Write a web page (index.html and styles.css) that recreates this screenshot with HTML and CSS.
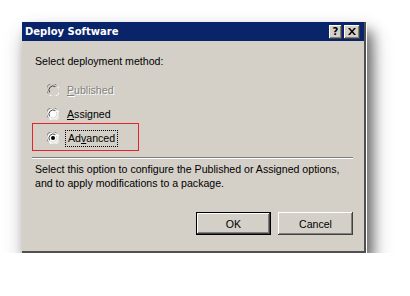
FILE: index.html
```html
<!DOCTYPE html>
<html>
<head>
<meta charset="utf-8">
<link rel="stylesheet" href="styles.css">
</head>
<body>
<div class="dialog">
  <div class="titlebar">
    <span class="title">Deploy Software</span>
    <div class="tbtns">
      <span class="tbtn help">?</span>
      <span class="tbtn close"><svg width="8" height="7" viewBox="0 0 8 7"><path d="M0 0h2l2 2.5L6 0h2L5 3.5 8 7H6L4 4.5 2 7H0l3-3.5z" fill="#000"/></svg></span>
    </div>
  </div>
  <div class="content">
    <p class="prompt">Select deployment method:</p>
    <div class="options">
      <div class="opt disabled">
        <svg class="radio" width="12" height="12" viewBox="0 0 12 12"><circle cx="6" cy="6" r="5.5" fill="#d4d0c8"/><path d="M1.2 9.5A5.5 5.5 0 0 1 9.5 1.2" stroke="#808080" fill="none"/><path d="M2.6 8.4A4.2 4.2 0 0 1 8.4 2.6" stroke="#404040" fill="none"/><path d="M10.8 2.5A5.5 5.5 0 0 1 2.5 10.8" stroke="#fff" fill="none"/></svg>
        <span class="lbl"><u>P</u>ublished</span>
      </div>
      <div class="opt">
        <svg class="radio" width="12" height="12" viewBox="0 0 12 12"><circle cx="6" cy="6" r="5.5" fill="#fff"/><path d="M1.2 9.5A5.5 5.5 0 0 1 9.5 1.2" stroke="#808080" fill="none"/><path d="M2.6 8.4A4.2 4.2 0 0 1 8.4 2.6" stroke="#404040" fill="none"/><path d="M10.8 2.5A5.5 5.5 0 0 1 2.5 10.8" stroke="#fff" fill="none"/><path d="M9.4 3.6A4.2 4.2 0 0 1 3.6 9.4" stroke="#d4d0c8" fill="none"/></svg>
        <span class="lbl"><u>A</u>ssigned</span>
      </div>
      <div class="opt">
        <svg class="radio" width="12" height="12" viewBox="0 0 12 12"><circle cx="6" cy="6" r="5.5" fill="#fff"/><path d="M1.2 9.5A5.5 5.5 0 0 1 9.5 1.2" stroke="#808080" fill="none"/><path d="M2.6 8.4A4.2 4.2 0 0 1 8.4 2.6" stroke="#404040" fill="none"/><path d="M10.8 2.5A5.5 5.5 0 0 1 2.5 10.8" stroke="#fff" fill="none"/><path d="M9.4 3.6A4.2 4.2 0 0 1 3.6 9.4" stroke="#d4d0c8" fill="none"/><circle cx="6" cy="6" r="2" fill="#000"/></svg>
        <span class="lbl focus">Ad<u>v</u>anced</span>
      </div>
    </div>
    <div class="sep"></div>
    <p class="desc">Select this option to configure the Published or Assigned options,<br>and to apply modifications to a package.</p>
    <div class="buttons">
      <button class="btn default">OK</button>
      <button class="btn">Cancel</button>
    </div>
  </div>
  <div class="annot"></div>
</div>
</body>
</html>
```

FILE: styles.css
```css
html, body {
  margin: 0;
  padding: 0;
  background: #fff;
}

body {
  padding: 22px 0 0 22px;
  font-family: "Liberation Sans", Arial, sans-serif;
}

.dialog {
  position: relative;
  width: 342px;
  height: 229px;
  background: #d4d0c8;
  border-right: 2px solid #505050;
  border-bottom: 2px solid #505050;
  box-shadow: 1px 1px 0 #fff, 6px 9px 12px rgba(0, 0, 0, 0.5), 4px 14px 22px rgba(0, 0, 0, 0.3);
  display: flex;
  flex-direction: column;
}

.titlebar {
  height: 19px;
  background: #0a246a;
  display: flex;
  align-items: center;
  justify-content: space-between;
  padding: 0 4px 0 3px;
}

.title {
  color: #fff;
  font-family: "DejaVu Sans", Verdana, sans-serif;
  font-weight: bold;
  font-size: 10px;
}

.tbtns {
  display: flex;
  gap: 2px;
}

.tbtn {
  width: 13px;
  height: 14px;
  background: #d4d0c8;
  box-shadow: inset -1px -1px #404040, inset 1px 1px #fff, inset -2px -2px #808080;
  display: flex;
  align-items: center;
  justify-content: center;
  font-family: "DejaVu Sans", sans-serif;
  font-weight: bold;
  font-size: 10px;
  color: #000;
  line-height: 1;
}

.tbtn.close {
  width: 16px;
}

.content {
  flex: 1;
  display: flex;
  flex-direction: column;
  padding: 14px 11px 0 13px;
  font-size: 10.6px;
  color: #000;
}

.prompt {
  margin: 0;
  line-height: 13px;
}

.options {
  display: flex;
  flex-direction: column;
  gap: 10px;
  margin: 15px 0 0 12px;
}

.opt {
  display: flex;
  align-items: center;
  height: 14px;
  gap: 7px;
}

.radio {
  flex: none;
}

.lbl {
  line-height: 13px;
  padding: 0 1px;
}

.opt.disabled .lbl {
  color: #808080;
  text-shadow: 1px 1px 0 #fff;
}

.lbl.focus {
  outline: 1px dotted #000;
  outline-offset: 1px;
  margin-left: 1px;
}

.sep {
  margin: 12px 0 0 -3px;
  border-top: 1px solid #808080;
  border-bottom: 1px solid #fff;
  height: 0;
}

.desc {
  margin: 3px 0 0;
  line-height: 14px;
}

.buttons {
  display: flex;
  justify-content: flex-end;
  gap: 7px;
  margin-top: 22px;
}

.btn {
  width: 75px;
  height: 23px;
  background: #d4d0c8;
  border: none;
  box-shadow: inset -1px -1px #404040, inset 1px 1px #fff, inset -2px -2px #808080, inset 2px 2px #d4d0c8;
  font-family: "Liberation Sans", Arial, sans-serif;
  font-size: 10.6px;
  color: #000;
  padding: 0;
}

.btn.default {
  box-shadow: inset 0 0 0 1px #000, inset -2px -2px #404040, inset 2px 2px #fff, inset -3px -3px #808080;
}

.annot {
  position: absolute;
  left: 10px;
  top: 101px;
  width: 105px;
  height: 26px;
  border: 1.5px solid #e3242b;
}
```
